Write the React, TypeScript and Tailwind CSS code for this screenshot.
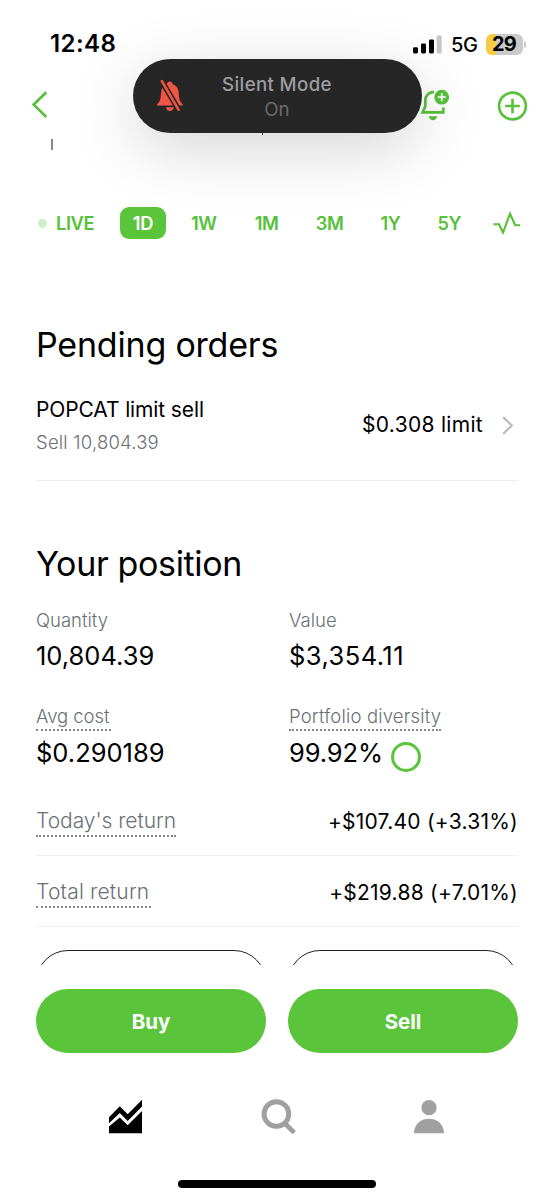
import React from 'react';

const ranges = [
  { label: '1D', width: 'w-[46px]' },
  { label: '1W', width: 'w-[51px]' },
  { label: '1M', width: 'w-[50px]' },
  { label: '3M', width: 'w-[51px]' },
  { label: '1Y', width: 'w-[46px]' },
  { label: '5Y', width: 'w-[47px]' },
];

const returns = [
  { label: "Today's return", value: '+$107.40 (+3.31%)', labelClass: 'w-[140px] tracking-[-0.05px]' },
  { label: 'Total return', value: '+$219.88 (+7.01%)', labelClass: 'w-[115px] tracking-[0.2px]' },
];

const StatusBar: React.FC = () => (
  <div className="flex h-[88px] items-center justify-between pl-[50px] pr-[28px]">
    <span className="text-2xl font-semibold tracking-[0.45px]">12:48</span>
    <div className="flex items-center">
      <svg width="29" height="19" viewBox="0 0 29 19" className="mr-[9px]">
        <rect x="0" y="12.2" width="5" height="6.3" rx="1.4" />
        <rect x="8" y="8.5" width="5" height="10" rx="1.4" />
        <rect x="16" y="4.5" width="5" height="14" rx="1.4" />
        <rect x="23.7" y="0.5" width="5" height="18" rx="1.4" fill="#c8c8c8" />
      </svg>
      <span className="mr-[9px] w-[26px] pt-px text-xl font-medium leading-none tracking-[-0.3px]">5G</span>
      <div className="flex h-[21px] w-[37px] items-center justify-center rounded-[6px] bg-linear-to-r from-[#f7ca45] from-28% to-[#cacaca] to-28%">
        <span className="pr-px text-xl font-bold leading-none tracking-[-0.8px]">29</span>
      </div>
      <div className="ml-px h-[7px] w-[2px] rounded-r-full bg-[#cacaca]"></div>
    </div>
  </div>
);

const SilentModeBanner: React.FC = () => (
  <div className="absolute left-[133px] top-[59px] flex h-[74px] w-[289px] items-center rounded-full bg-[#262626] shadow-[0_16px_64px_rgba(0,0,0,0.17)]">
    <svg width="28" height="34" viewBox="0 0 28 34" className="ml-[23px]">
      <path d="M1.2 26.5C0.6 25.6 1.5 24.6 2.7 23.4C5 21 4.6 17 5.2 12.5C5.7 8.6 8 6.2 10.8 5.2C11 3.6 12 2.4 13.8 2.4C15.6 2.4 16.6 3.6 16.8 5.2C20 6.2 22.2 8.8 22.6 12.5C23.1 17 22.8 21 25.1 23.4C26.3 24.6 27.2 25.6 26.6 26.5Z" fill="#ef5545" />
      <path d="M10 28.2H17.8C17.6 30.5 16 32 13.9 32C11.8 32 10.2 30.5 10 28.2Z" fill="#ef5545" />
      <path d="M4.5 0L24.5 34" stroke="#262626" strokeWidth="5.6" />
      <path d="M5.8 2L22.6 30.8" stroke="#ef5545" strokeWidth="2.5" strokeLinecap="round" />
    </svg>
    <div className="ml-[23px] mt-[2px] w-[140px] text-center text-[18.7px] leading-[25px]">
      <div className="font-medium tracking-[0.35px] whitespace-nowrap text-[#9d9da1]">Silent Mode</div>
      <div className="text-[#6a6a6d]">On</div>
    </div>
  </div>
);

const NavBar: React.FC = () => (
  <div className="flex h-[34px] items-center pl-[31px] pr-[26px]">
    <svg width="18" height="28" viewBox="0 0 18 28" fill="none">
      <path d="M15.3 1.2L2.7 13.6L15.3 26" stroke="#57c13a" strokeWidth="2.7" />
    </svg>
    <div className="ml-auto flex items-center">
      <svg width="32" height="34" viewBox="0 0 32 34" fill="none" className="mr-[46px]">
        <path d="M15 3.8C9 4.2 6.3 8 6.3 13V18.5L3.6 24.3H24.3V19.5" stroke="#57c13a" strokeWidth="2.7" />
        <path d="M9.7 28.2H18.3C17.8 30.8 16 32.2 14 32.2C12 32.2 10.2 30.8 9.7 28.2Z" fill="#57c13a" />
        <circle cx="22.7" cy="9.2" r="7.4" fill="#57c13a" />
        <path d="M18.7 9.2H26.7M22.7 5.2V13.2" stroke="white" strokeWidth="1.7" />
      </svg>
      <svg width="31" height="31" viewBox="0 0 31 31" fill="none" stroke="#57c13a" strokeWidth="2.6">
        <circle cx="15.5" cy="16" r="13.4" />
        <path d="M8.2 16H22.8M15.5 8.7V23.3" />
      </svg>
    </div>
  </div>
);

const RangePicker: React.FC = () => (
  <div className="flex h-8 items-center gap-[12.4px] pl-[38px] text-[18.3px] font-semibold text-[#57c13a]">
    <button className="flex w-[70px] items-center gap-[9px]">
      <span className="size-[9px] rounded-full bg-[#cdf0cb]"></span>
      <span className="pt-px tracking-[-0.4px]">LIVE</span>
    </button>
    {ranges.map((range) => (
      <button
        key={range.label}
        className={`h-8 rounded-[9px] pr-px pt-px tracking-[-0.4px] ${range.width} ${range.label === '1D' ? 'bg-[#5ac53a] text-white' : ''}`}
      >
        {range.label}
      </button>
    ))}
    <svg width="28" height="24" viewBox="0 0 28 24" fill="none" className="ml-[7px]">
      <path d="M0.5 13.2H6L10 21.5L17 2.8L22.2 14.3H27" stroke="#57c13a" strokeWidth="2.1" />
    </svg>
  </div>
);

const PendingOrders: React.FC = () => (
  <section className="border-b border-[#ededed]">
    <h2 className="mt-[86px] text-[34px] leading-10 tracking-[-0.2px]">Pending orders</h2>
    <div className="mt-[29px] flex h-[86px] items-start">
      <div>
        <div className="text-[21px] leading-8 tracking-[-0.12px]">POPCAT limit sell</div>
        <div className="text-[18.5px] font-[350] leading-8 tracking-[0.2px] text-[#6a7075]">Sell 10,804.39</div>
      </div>
      <div className="ml-auto flex h-[62px] items-center">
        <span className="text-[21px] tracking-[0.3px]">$0.308 limit</span>
        <svg width="12" height="19" viewBox="0 0 12 19" fill="none" className="ml-[19px] mr-[4px]">
          <path d="M1.2 1.2L9.8 9.5L1.2 17.8" stroke="#b9bdc0" strokeWidth="2.3" />
        </svg>
      </div>
    </div>
  </section>
);

const Position: React.FC = () => (
  <section>
    <h2 className="mt-[63px] text-[34px] leading-10 tracking-[-0.35px]">Your position</h2>
    <div className="mt-5 grid grid-cols-[253px_1fr] gap-y-6">
      <div>
        <div className="h-8 text-[18.5px] font-[350] leading-8 text-[#6a7075]">Quantity</div>
        <div className="text-[25.5px] leading-10">10,804.39</div>
      </div>
      <div>
        <div className="h-8 text-[18.5px] font-[350] leading-8 text-[#6a7075]">Value</div>
        <div className="text-[25.5px] leading-10 tracking-[0.45px]">$3,354.11</div>
      </div>
      <div>
        <div className="w-[75px] border-b-2 border-dotted border-[#83888c] pt-[3px] text-[18.5px] font-[350] leading-[26px] tracking-[-0.05px] whitespace-nowrap text-[#6a7075]">Avg cost</div>
        <div className="mt-[2px] text-[25.5px] leading-10">$0.290189</div>
      </div>
      <div>
        <div className="w-[152px] border-b-2 border-dotted border-[#83888c] pt-[3px] text-[18.5px] font-[350] leading-[26px] tracking-[0.17px] whitespace-nowrap text-[#6a7075]">Portfolio diversity</div>
        <div className="mt-[2px] flex h-10 items-center">
          <span className="w-[102px] text-[25.5px] tracking-[-0.1px]">99.92%</span>
          <span className="mt-[7px] size-[30px] rounded-full border-3 border-[#5ac53a]"></span>
        </div>
      </div>
    </div>
    <div className="mt-3">
      {returns.map((row) => (
        <div key={row.label} className="flex h-[71px] items-center justify-between border-b border-[#f0f0f0]">
          <div className={`mt-px h-[32px] border-b-2 border-dotted border-[#83888c] pt-[2px] text-[21px] font-[350] leading-[28px] whitespace-nowrap text-[#6a7075] ${row.labelClass}`}>
            {row.label}
          </div>
          <div className="pt-[3px] text-[21px] tracking-[0.25px]">{row.value}</div>
        </div>
      ))}
    </div>
    {/* Next row of buttons, cut off by the trade bar */}
    <div className="mt-[23px] grid h-[15px] grid-cols-2 gap-[22px] overflow-hidden">
      <div className="h-16 rounded-full border border-[#222]"></div>
      <div className="h-16 rounded-full border border-[#222]"></div>
    </div>
  </section>
);

const App: React.FC = () => {
  return (
    <div className="relative h-[1200px] w-[554px] overflow-hidden bg-white font-['Inter',sans-serif] text-black">
      <StatusBar />
      <NavBar />
      <div className="flex h-[85px] items-start pl-[51px]">
        <div className="mt-[17px] h-[11px] w-[1.5px] bg-[#888]"></div>
        <div className="ml-[209px] h-[13px] w-[1.5px] bg-[#444]"></div>
      </div>
      <RangePicker />

      <main className="px-9">
        <PendingOrders />
        <Position />
        <div className="mt-6 grid grid-cols-2 gap-[22px] text-[20.5px] font-bold text-white">
          <button className="h-16 rounded-full bg-[#5ac53a] pt-[3px]">Buy</button>
          <button className="h-16 rounded-full bg-[#5ac53a] pt-[3px]">Sell</button>
        </div>
      </main>

      <nav className="mt-[46px] flex h-9 items-start pl-[109px]">
        <svg width="33" height="35" viewBox="0 0 33 35">
          <path d="M0 18.2L10.8 7.3L18.7 15.2L33 0.8V7.6L18.7 22L10.8 14L0 24.3Z" />
          <path d="M0 27.5L10.8 18.5L18.7 26.3L33 12V34.3H0Z" />
        </svg>
        <svg width="36" height="36" viewBox="0 0 36 36" fill="none" stroke="#a0a0a0" className="ml-[119px]">
          <circle cx="15.4" cy="15" r="12.3" strokeWidth="5" />
          <path d="M23.5 24L33.2 33.6" strokeWidth="4.8" />
        </svg>
        <svg width="30" height="35" viewBox="0 0 30 35" fill="#a0a0a0" className="ml-[117px]">
          <circle cx="15" cy="8.7" r="7.6" />
          <path d="M0 34.3C0 25.6 6.2 19.7 15 19.7C23.8 19.7 30 25.6 30 34.3Z" />
        </svg>
      </nav>
      <div className="mx-auto mt-[45px] h-2 w-[198px] rounded-full bg-black"></div>

      <SilentModeBanner />
    </div>
  );
};

export default App;
